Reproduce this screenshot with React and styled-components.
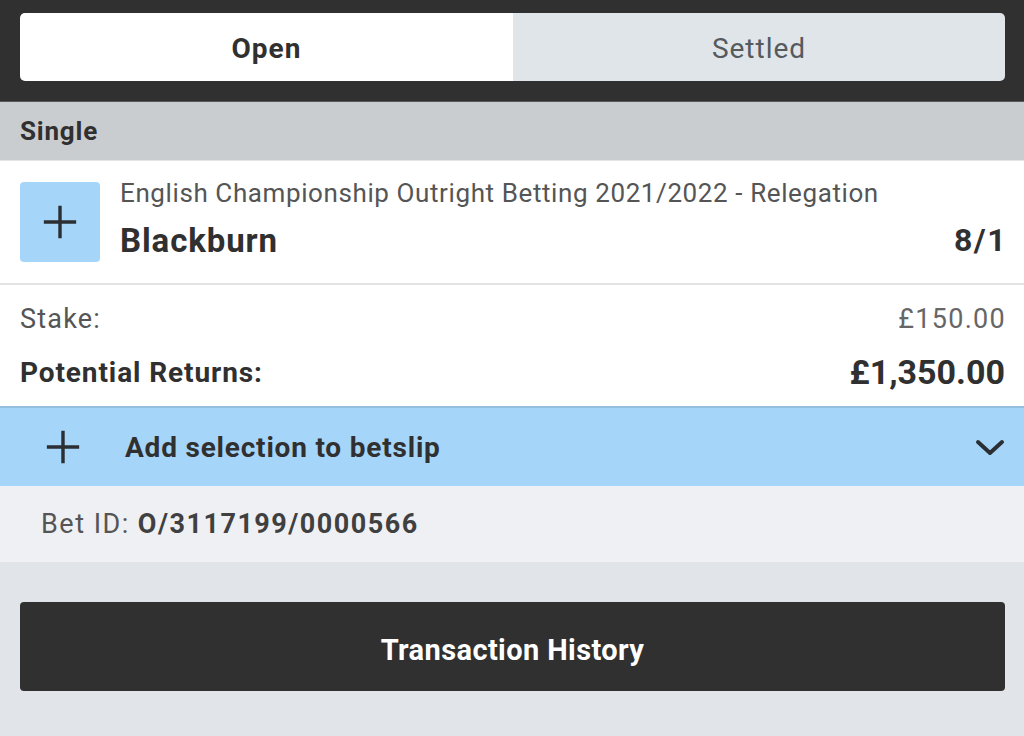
import React from 'react';
import styled, { createGlobalStyle } from 'styled-components';

const GlobalStyle = createGlobalStyle`
  html, body {
    margin: 0;
    padding: 0;
    background: #e1e5e9;
    font-family: Roboto, "Liberation Sans", Arial, sans-serif;
  }
`;

const Page = styled.div`
  width: 1024px;
  height: 736px;
  overflow: hidden;
  background: #e1e5e9;
  color: #303030;
`;

const TopBar = styled.div`
  background: #303030;
  padding: 13px 19px 20px 20px;
  border-bottom: 1px solid #5a5a5a;
`;

const Tabs = styled.div`
  display: grid;
  grid-template-columns: 493px 1fr;
  height: 68px;
  border-radius: 5px;
  overflow: hidden;
`;

const Tab = styled.div`
  display: flex;
  align-items: center;
  justify-content: center;
  padding-top: 3px;
  font-size: 28px;
  letter-spacing: 1px;
  background: ${(p) => (p.active ? '#ffffff' : '#e0e5e9')};
  color: ${(p) => (p.active ? '#303030' : '#555a5e')};
  font-weight: ${(p) => (p.active ? 700 : 400)};
`;

const SectionHeader = styled.div`
  height: 58px;
  display: flex;
  align-items: center;
  padding-left: 20px;
  background: #cacdd0;
  font-size: 26px;
  letter-spacing: 0.8px;
  font-weight: 700;
  color: #303030;
  border-bottom: 1px solid #e2e4e6;
`;

const Selection = styled.div`
  display: flex;
  align-items: center;
  gap: 20px;
  height: 122px;
  padding: 0 20px;
  background: #fff;
  border-bottom: 2px solid #e3e3e3;
`;

const PlusBox = styled.div`
  width: 80px;
  height: 80px;
  flex: none;
  border-radius: 4px;
  background: #a6d5fa;
  display: flex;
  align-items: center;
  justify-content: center;
`;

const SelectionInfo = styled.div`
  flex: 1;
  display: flex;
  flex-direction: column;
  margin-top: -8px;
`;

const Market = styled.div`
  font-size: 26px;
  letter-spacing: 0.6px;
  color: #555;
  line-height: 32px;
`;

const NameRow = styled.div`
  display: flex;
  justify-content: space-between;
  align-items: center;
  margin-top: 12px;
`;

const Name = styled.div`
  font-size: 33px;
  letter-spacing: 0.9px;
  font-weight: 700;
  color: #303030;
`;

const Odds = styled.div`
  font-size: 32px;
  letter-spacing: 1.5px;
  font-weight: 700;
  color: #303030;
  margin-right: -3px;
`;

const Summary = styled.div`
  background: #fff;
  padding: 17px 19px 16px 20px;
  display: flex;
  flex-direction: column;
  gap: 18px;
`;

const SummaryRow = styled.div`
  display: flex;
  justify-content: space-between;
  align-items: center;
  height: ${(p) => (p.strong ? '36px' : '34px')};
`;

const Label = styled.span`
  font-size: ${(p) => (p.strong ? '28px' : '27px')};
  letter-spacing: ${(p) => (p.strong ? '0.9px' : '1.2px')};
  color: ${(p) => (p.strong ? '#303030' : '#555')};
  font-weight: ${(p) => (p.strong ? 700 : 400)};
`;

const Amount = styled.span`
  font-size: ${(p) => (p.strong ? '34px' : '27px')};
  letter-spacing: ${(p) => (p.strong ? '0px' : '1.3px')};
  margin-right: ${(p) => (p.strong ? '0px' : '-1px')};
  color: ${(p) => (p.strong ? '#303030' : '#666')};
  font-weight: ${(p) => (p.strong ? 700 : 400)};
`;

const AddBar = styled.div`
  display: flex;
  align-items: center;
  height: 78px;
  padding: 0 18px 0 44px;
  background: #a6d5fa;
  border-top: 2px solid #93bedd;
`;

const AddText = styled.span`
  flex: 1;
  margin-left: 43px;
  font-size: 28px;
  letter-spacing: 0.8px;
  font-weight: 700;
  color: #303030;
`;

const BetIdRow = styled.div`
  height: 76px;
  display: flex;
  align-items: center;
  padding-left: 41px;
  background: #eff0f4;
  font-size: 27px;
  letter-spacing: 1.5px;
  color: #555;
`;

const BetIdValue = styled.b`
  margin-left: 8px;
  color: #404040;
  font-weight: 700;
`;

const Footer = styled.div`
  padding: 40px 19px 40px 20px;
`;

const HistoryButton = styled.button`
  width: 100%;
  height: 89px;
  padding-top: 8px;
  border: none;
  border-radius: 4px;
  background: #303030;
  color: #fff;
  font-family: inherit;
  font-size: 29px;
  letter-spacing: 0.4px;
  font-weight: 700;
  cursor: pointer;
`;

const Plus = ({ size = 40 }) => (
  <svg width={size} height={size} viewBox="0 0 40 40" fill="none">
    <path d="M20 3v34M3 20h34" stroke="#2b2f33" strokeWidth="3.6" />
  </svg>
);

const Chevron = () => (
  <svg width="32" height="24" viewBox="0 0 32 24" fill="none">
    <path d="M4 7l12 11L28 7" stroke="#2b2f33" strokeWidth="4" strokeLinecap="round" strokeLinejoin="round" />
  </svg>
);

export default function App() {
  return (
    <Page>
      <GlobalStyle />
      <TopBar>
        <Tabs>
          <Tab active>Open</Tab>
          <Tab>Settled</Tab>
        </Tabs>
      </TopBar>
      <SectionHeader>Single</SectionHeader>
      <Selection>
        <PlusBox>
          <Plus size={38} />
        </PlusBox>
        <SelectionInfo>
          <Market>English Championship Outright Betting 2021/2022 - Relegation</Market>
          <NameRow>
            <Name>Blackburn</Name>
            <Odds>8/1</Odds>
          </NameRow>
        </SelectionInfo>
      </Selection>
      <Summary>
        <SummaryRow>
          <Label>Stake:</Label>
          <Amount>£150.00</Amount>
        </SummaryRow>
        <SummaryRow strong>
          <Label strong>Potential Returns:</Label>
          <Amount strong>£1,350.00</Amount>
        </SummaryRow>
      </Summary>
      <AddBar>
        <Plus size={38} />
        <AddText>Add selection to betslip</AddText>
        <Chevron />
      </AddBar>
      <BetIdRow>
        Bet ID:<BetIdValue>O/3117199/0000566</BetIdValue>
      </BetIdRow>
      <Footer>
        <HistoryButton>Transaction History</HistoryButton>
      </Footer>
    </Page>
  );
}
